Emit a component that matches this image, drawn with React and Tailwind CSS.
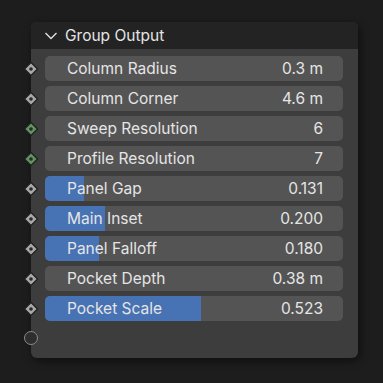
const rows = [
  { label: 'Column Radius', value: '0.3 m' },
  { label: 'Column Corner', value: '4.6 m' },
  { label: 'Sweep Resolution', value: '6', int: true },
  { label: 'Profile Resolution', value: '7', int: true },
  { label: 'Panel Gap', value: '0.131', fill: 0.131 },
  { label: 'Main Inset', value: '0.200', fill: 0.2 },
  { label: 'Panel Falloff', value: '0.180', fill: 0.18 },
  { label: 'Pocket Depth', value: '0.38 m' },
  { label: 'Pocket Scale', value: '0.523', fill: 0.523 },
]

function Socket({ int }) {
  const color = int ? '#5f9463' : '#a8a8a8'
  return (
    <svg width="16" height="16" viewBox="0 0 16 16" className="absolute left-[-8px] top-1/2 -translate-y-1/2">
      <path d="M8 1.5 L14.5 8 L8 14.5 L1.5 8 Z" fill={color} stroke="#1e1e1e" strokeWidth="1.2" />
      <circle cx="8" cy="8" r="1.8" fill="#2a2a2a" />
    </svg>
  )
}

function Row({ label, value, fill, int }) {
  return (
    <div className="relative h-[25px] pl-[14px] pr-[15px]">
      <Socket int={int} />
      <div className="relative h-full rounded-[5px] bg-[#545454] overflow-hidden">
        {fill != null && (
          <div className="absolute inset-y-0 left-0 bg-[#4772b3]" style={{ width: `${fill * 100}%` }} />
        )}
        <div className="relative flex h-full items-center justify-between pl-[22px] pr-[20px] pt-[1px] text-[15.5px] text-[#e5e5e5]">
          <span>{label}</span>
          <span>{value}</span>
        </div>
      </div>
    </div>
  )
}

export default function App() {
  return (
    <div className="w-[383px] h-[383px] bg-[#1d1d1d] pt-[22px] pl-[31px]" style={{ fontFamily: 'Inter, "Noto Sans", sans-serif' }}>
      <div className="w-[327px] h-[336px] rounded-[6px] bg-[#3d3d3d] shadow-[2px_3px_8px_rgba(0,0,0,0.5)] flex flex-col">
        <div className="h-[27px] rounded-t-[6px] bg-[#232323] flex items-center pl-[13px] gap-[7px] pt-[1px] text-[15.5px] text-[#e5e5e5]">
          <svg width="14" height="14" viewBox="0 0 14 14">
            <path d="M1.5 4 L7 9.5 L12.5 4" fill="none" stroke="#e0e0e0" strokeWidth="1.4" />
          </svg>
          <span>Group Output</span>
        </div>
        <div className="pt-[7px] flex flex-col gap-[5px]">
          {rows.map((r) => (
            <Row key={r.label} {...r} />
          ))}
        </div>
        <div className="relative h-[34px]">
          <span className="absolute left-[-7px] top-[10px] w-[14px] h-[14px] rounded-full border-[1.5px] border-[#8a8a8a] bg-[#2e2e2e]" />
        </div>
      </div>
    </div>
  )
}
